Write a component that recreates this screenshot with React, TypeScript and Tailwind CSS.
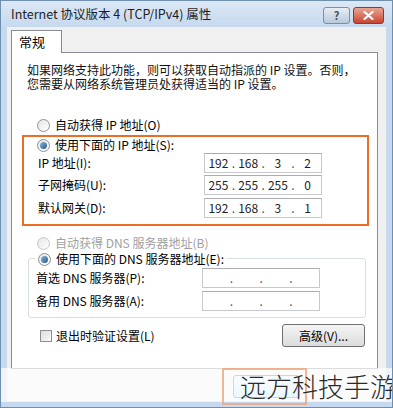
import React from 'react';

const cjk = { fontFamily: '"Noto Sans CJK SC", "Noto Sans", sans-serif' };

function Radio({ checked = false, disabled = false }: { checked?: boolean; disabled?: boolean }) {
  return (
    <span
      className={`flex h-[13px] w-[13px] shrink-0 items-center justify-center rounded-full border bg-gradient-to-br from-[#e6e6e6] to-[#ffffff] ${
        disabled ? 'border-[#c8c8c8]' : 'border-[#8e8f8f]'
      }`}
    >
      {checked && (
        <span className="h-[7px] w-[7px] rounded-full bg-gradient-to-br from-[#8fb6d8] to-[#1d5a8e]" />
      )}
    </span>
  );
}

function IpBox({ parts }: { parts?: string[] }) {
  const vals = parts ?? ['', '', '', ''];
  return (
    <div className="flex h-[20px] w-[118px] items-center border border-[#c5c8cc] border-t-[#abadb3] bg-white text-[12px] text-[#222]">
      {vals.map((v, i) => (
        <React.Fragment key={i}>
          {i > 0 && <span className="w-[3px] text-center leading-none text-[#555]">.</span>}
          <span className="w-[27px] text-center leading-none">{v}</span>
        </React.Fragment>
      ))}
    </div>
  );
}

function FieldRow({ label, parts, className = '' }: { label: string; parts?: string[]; className?: string }) {
  return (
    <div className={`flex h-[20px] items-center ${className}`}>
      <span className="w-[180px] pl-[14px]">{label}</span>
      <IpBox parts={parts} />
    </div>
  );
}

export default function App() {
  return (
    <div
      className="relative flex h-[408px] w-[393px] flex-col overflow-hidden border border-[#6f8fae] bg-[#c6d9ee] text-[12px] text-black"
      style={cjk}
    >
      {/* Barra de título */}
      <div className="flex h-[26px] shrink-0 items-center bg-gradient-to-b from-[#dbe8f6] to-[#c6d9ee] pl-[10px] pr-[8px]">
        <span className="text-[12.5px] text-[#1e1e1e]">Internet 协议版本 4 (TCP/IPv4) 属性</span>
        <div className="ml-auto flex items-center gap-[3px] self-start pt-[6px]">
          <div className="flex h-[17px] w-[27px] items-center justify-center rounded-[3px] border border-[#7a8ea5] bg-gradient-to-b from-[#e8eef5] to-[#b9c9db] text-[11px] font-bold text-[#3e4f63]">
            ?
          </div>
          <div className="flex h-[17px] w-[31px] items-center justify-center rounded-[3px] border border-[#8a3b34] bg-gradient-to-b from-[#e8a493] to-[#c7422f]">
            <svg width="11" height="9" viewBox="0 0 11 9">
              <path d="M1.5 1 L9.5 8 M9.5 1 L1.5 8" stroke="#ffffff" strokeWidth="2.2" strokeLinecap="round" />
            </svg>
          </div>
        </div>
      </div>

      {/* Área cliente */}
      <div className="mx-[6px] flex flex-1 flex-col bg-[#f0f0f0] pt-[3px]">
        <div className="flex pl-[4px]">
          <div className="relative z-10 -mb-px flex h-[23px] w-[51px] items-center border border-b-0 border-[#898c95] bg-white pl-[7px] text-[13px]">
            常规
          </div>
        </div>

        <div className="mr-[8px] ml-[4px] flex h-[317px] flex-col border border-[#898c95] bg-white">
          <p className="pt-[10px] pl-[15px] leading-[14px] text-[#111]">
            如果网络支持此功能，则可以获取自动指派的 IP 设置。否则，
            <br />
            您需要从网络系统管理员处获得适当的 IP 设置。
          </p>

          <div className="mt-[26px] flex h-[16px] items-center gap-[5px] pl-[25px]">
            <Radio />
            <span>自动获得 IP 地址(O)</span>
          </div>

          <div className="mt-[2px] mr-[8px] ml-[10px] flex flex-col border-2 border-[#ea6f25] pb-[6px]">
            <div className="flex h-[16px] items-center gap-[5px] pl-[13px]">
              <Radio checked />
              <span>使用下面的 IP 地址(S):</span>
            </div>
            <FieldRow label="IP 地址(I):" parts={['192', '168', '3', '2']} />
            <FieldRow className="mt-[2px]" label="子网掩码(U):" parts={['255', '255', '255', '0']} />
            <FieldRow className="mt-[3px]" label="默认网关(D):" parts={['192', '168', '3', '1']} />
          </div>

          <div className="mt-[9px] flex h-[16px] items-center gap-[5px] pl-[25px] text-[#a0a0a0]">
            <Radio disabled />
            <span>自动获得 DNS 服务器地址(B)</span>
          </div>

          <div className="mt-[7px] mr-[11px] ml-[16px] flex h-[60px] flex-col rounded-[3px] border border-[#d5dfe5]">
            <div className="-mt-[8px] ml-[6px] flex h-[16px] w-fit items-center gap-[5px] bg-white pr-[3px] pl-[3px]">
              <Radio checked />
              <span>使用下面的 DNS 服务器地址(E):</span>
            </div>
            <div className="-ml-[7px] flex flex-col">
              <FieldRow className="mt-[1px]" label="首选 DNS 服务器(P):" />
              <FieldRow className="mt-[3px]" label="备用 DNS 服务器(A):" />
            </div>
          </div>

          <div className="mt-[6px] flex items-center pr-[12px] pl-[28px]">
            <span className="h-[12px] w-[12px] border border-[#8e8f8f] bg-gradient-to-br from-[#dcdcdc] to-[#fafafa]" />
            <span className="ml-[4px]">退出时验证设置(L)</span>
            <div className="ml-auto flex h-[23px] w-[83px] items-center justify-center rounded-[3px] border border-[#707070] bg-gradient-to-b from-[#f5f5f5] to-[#dcdcdc]">
              高级(V)...
            </div>
          </div>
        </div>

        {/* Botón inferior, tapado por la marca de agua */}
        <div className="flex flex-1 items-start pt-[6px] pl-[226px]">
          <div className="flex h-[23px] w-[67px] items-center justify-center rounded-[3px] border border-[#3c7fb1] bg-gradient-to-b from-[#eaf6fd] to-[#bee6fd]" />
        </div>
      </div>
      <div className="h-[6px] shrink-0" />

      {/* Marca de agua */}
      <div className="pointer-events-none absolute top-[367px] left-0 h-[34px] w-full bg-white/70" />
      <div className="pointer-events-none absolute top-[367px] left-[221px] h-[37px] w-[85px] border-2 border-[#f2a47a]/80" />
      <div className="pointer-events-none absolute top-[366px] left-[239px] text-[26px] leading-[38px] font-light whitespace-nowrap text-[#2a2a2a]">
        远方科技手游
      </div>
    </div>
  );
}
